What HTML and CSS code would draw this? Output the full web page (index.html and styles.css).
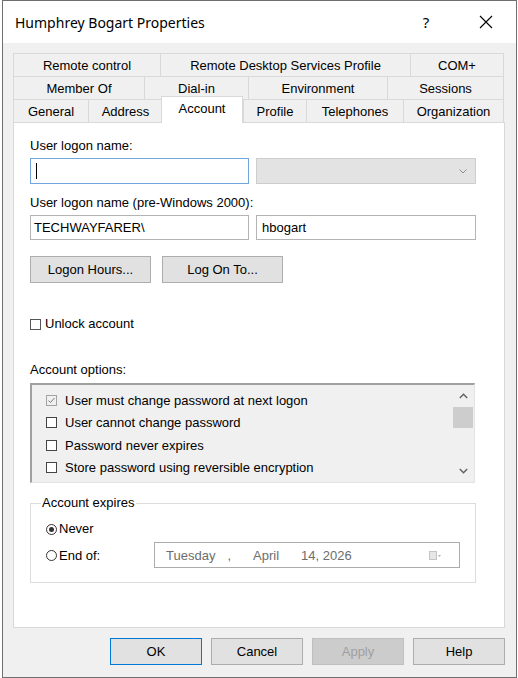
FILE: index.html
```html
<!DOCTYPE html>
<html>
<head>
    <title>Humphrey Bogart Properties</title>
    <link rel="stylesheet" href="styles.css">
</head>
<body>

<div class="window">
    <div class="titlebar">
        <span class="title">Humphrey Bogart Properties</span>
        <span class="help">?</span>
        <span class="close">
            <svg width="14" height="14" viewBox="0 0 14 14"><path d="M1 1L13 13M13 1L1 13" stroke="#000" stroke-width="1.1" fill="none"/></svg>
        </span>
    </div>

    <div class="content">
        <div class="tabs">
            <div class="tab-row row1">
                <div class="tab">Remote control</div>
                <div class="tab">Remote Desktop Services Profile</div>
                <div class="tab">COM+</div>
            </div>
            <div class="tab-row row2">
                <div class="tab">Member Of</div>
                <div class="tab">Dial-in</div>
                <div class="tab">Environment</div>
                <div class="tab">Sessions</div>
            </div>
            <div class="tab-row row3">
                <div class="tab">General</div>
                <div class="tab">Address</div>
                <div class="tab active">Account</div>
                <div class="tab">Profile</div>
                <div class="tab">Telephones</div>
                <div class="tab">Organization</div>
            </div>
        </div>

        <div class="panel">
            <div class="label">User logon name:</div>
            <div class="field-row">
                <div class="input focused"><span class="caret"></span></div>
                <div class="combo">
                    <svg width="8" height="5" viewBox="0 0 8 5"><polyline points="0.5,0.5 4,4 7.5,0.5" fill="none" stroke="#8c8c8c"/></svg>
                </div>
            </div>

            <div class="label second">User logon name (pre-Windows 2000):</div>
            <div class="field-row">
                <div class="input short">TECHWAYFARER\</div>
                <div class="input short wide">hbogart</div>
            </div>

            <div class="button-row">
                <button class="btn">Logon Hours...</button>
                <button class="btn">Log On To...</button>
            </div>

            <div class="check-line unlock">
                <span class="box"></span>
                <span>Unlock account</span>
            </div>

            <div class="label options-label">Account options:</div>
            <div class="listbox">
                <div class="list-items">
                    <div class="list-item">
                        <svg class="tick" width="11" height="11" viewBox="0 0 11 11"><rect x="0.5" y="0.5" width="10" height="10" fill="none" stroke="#a3a3a3"/><polyline points="2.5,5.5 4.5,7.5 8.5,3" fill="none" stroke="#7a7a7a"/></svg>
                        <span>User must change password at next logon</span>
                    </div>
                    <div class="list-item">
                        <span class="box"></span>
                        <span>User cannot change password</span>
                    </div>
                    <div class="list-item">
                        <span class="box"></span>
                        <span>Password never expires</span>
                    </div>
                    <div class="list-item">
                        <span class="box"></span>
                        <span>Store password using reversible encryption</span>
                    </div>
                </div>
                <div class="scrollbar">
                    <div class="arrow">
                        <svg width="9" height="6" viewBox="0 0 9 6"><polyline points="0.8,5 4.5,1.2 8.2,5" fill="none" stroke="#606060" stroke-width="1.4"/></svg>
                    </div>
                    <div class="thumb"></div>
                    <div class="track"></div>
                    <div class="arrow">
                        <svg width="9" height="6" viewBox="0 0 9 6"><polyline points="0.8,1 4.5,4.8 8.2,1" fill="none" stroke="#606060" stroke-width="1.4"/></svg>
                    </div>
                </div>
            </div>

            <fieldset class="expires">
                <legend>Account expires</legend>
                <div class="radio-line never">
                    <span class="radio checked"></span>
                    <span>Never</span>
                </div>
                <div class="radio-line end">
                    <div class="end-label">
                        <span class="radio"></span>
                        <span>End of:</span>
                    </div>
                    <div class="datepicker">
                        <span class="day">Tuesday</span>
                        <span class="comma">,</span>
                        <span class="month">April</span>
                        <span class="date">14, 2026</span>
                        <svg class="cal" width="13" height="9" viewBox="0 0 13 9"><rect x="0.5" y="0.5" width="7" height="8" fill="#e6e6e6" stroke="#c4c4c4"/><polygon points="9,4 12,4 10.5,6" fill="#b0b0b0"/></svg>
                    </div>
                </div>
            </fieldset>
        </div>

        <div class="dialog-buttons">
            <button class="btn dlg default">OK</button>
            <button class="btn dlg">Cancel</button>
            <button class="btn dlg disabled">Apply</button>
            <button class="btn dlg">Help</button>
        </div>
    </div>
</div>

</body>
</html>
```

FILE: styles.css
```css
* {
    box-sizing: border-box;
}
body {
    margin: 0;
    background-color: #fff;
    font-family: "Liberation Sans", Arial, sans-serif;
    font-size: 13px;
    color: #000;
}
.window {
    margin-left: 2px;
    width: 515px;
    height: 678px;
    border: 1px solid #6f6f6f;
    background-color: #f0f0f0;
}
.titlebar {
    height: 42px;
    background-color: #fff;
    display: flex;
    align-items: center;
    padding-left: 12px;
}
.title {
    font-family: "Noto Sans", sans-serif;
    font-size: 14px;
}
.help {
    margin-left: auto;
    width: 46px;
    text-align: center;
    font-family: "Noto Sans", sans-serif;
    font-size: 15px;
}
.close {
    width: 46px;
    margin-left: 14px;
    margin-right: 7px;
    display: flex;
    justify-content: center;
}
.content {
    padding: 10px 10px 0 10px;
}
.tabs {
    width: 491px;
}
.tab-row {
    display: grid;
    height: 23px;
}
.row1 {
    grid-template-columns: 147px 250px 94px;
}
.row2 {
    grid-template-columns: 131px 104px 139px 117px;
}
.row3 {
    grid-template-columns: 75px 74px 81px 63px 97px 101px;
}
.tab {
    display: flex;
    align-items: center;
    justify-content: center;
    white-space: nowrap;
    border-top: 1px solid #d9d9d9;
    border-left: 1px solid #d9d9d9;
    background-color: #f0f0f0;
}
.tab:last-child {
    border-right: 1px solid #d9d9d9;
}
.tab.active {
    position: relative;
    z-index: 1;
    background-color: #fff;
    margin-top: -3px;
    margin-bottom: -1px;
    margin-left: -1px;
    border-right: 1px solid #d9d9d9;
    padding-bottom: 4px;
}
.panel {
    width: 492px;
    height: 506px;
    background-color: #fff;
    border: 1px solid #d9d9d9;
    padding: 15px 16px 0 16px;
}
.label {
    line-height: 16px;
}
.label.second {
    margin-top: 11px;
}
.field-row {
    display: flex;
    gap: 7px;
    margin-top: 4px;
}
.input {
    width: 219px;
    height: 26px;
    border: 1px solid #b4b4b4;
    padding-left: 3px;
    display: flex;
    align-items: center;
    background-color: #fff;
}
.input.focused {
    border-color: #6fa6de;
}
.input.short {
    height: 25px;
}
.input.wide {
    width: 220px;
    padding-left: 5px;
}
.caret {
    width: 1px;
    height: 16px;
    margin-left: 2px;
    background-color: #000;
}
.combo {
    width: 220px;
    height: 26px;
    background-color: #e3e3e3;
    border: 1px solid #cdcdcd;
    display: flex;
    align-items: center;
    justify-content: flex-end;
    padding-right: 8px;
}
.button-row {
    display: flex;
    gap: 11px;
    margin-top: 16px;
}
.btn {
    height: 27px;
    width: 121px;
    background-color: #e1e1e1;
    border: 1px solid #adadad;
    font-family: "Liberation Sans", Arial, sans-serif;
    font-size: 13px;
    color: #000;
    padding: 0;
}
.check-line {
    display: flex;
    align-items: center;
    gap: 4px;
    line-height: 16px;
}
.unlock {
    margin-top: 33px;
}
.box {
    width: 11px;
    height: 11px;
    border: 1px solid #333;
    background-color: #fff;
}
.unlock .box {
    border-color: #555;
}
.options-label {
    margin-top: 30px;
}
.listbox {
    margin-top: 5px;
    width: 445px;
    height: 100px;
    display: flex;
    background-color: #f0f0f0;
    border-top: 2px solid #a0a0a0;
    border-left: 2px solid #a0a0a0;
    border-right: 1px solid #e3e3e3;
    border-bottom: 1px solid #e3e3e3;
}
.list-items {
    flex: 1;
    padding: 4px 0 0 14px;
}
.list-item {
    height: 22.5px;
    display: flex;
    align-items: center;
    gap: 8px;
}
.list-item .box {
    border-color: #444;
}
.scrollbar {
    width: 20px;
    margin-right: 1px;
    display: flex;
    flex-direction: column;
}
.arrow {
    height: 22px;
    display: flex;
    align-items: center;
    justify-content: center;
}
.thumb {
    height: 21px;
    background-color: #cdcdcd;
}
.track {
    flex: 1;
}
.expires {
    margin: 12px 0 0 0;
    width: 446px;
    border: 1px solid #dcdcdc;
    padding: 0 10px 14px 10px;
}
.expires legend {
    padding: 0 1px;
    line-height: 16px;
}
.radio-line {
    display: flex;
    align-items: center;
    gap: 2px;
    margin-left: 5px;
}
.never {
    margin-top: 10px;
    line-height: 16px;
}
.end {
    margin-top: 5px;
    gap: 0;
}
.end-label {
    width: 108px;
    display: flex;
    align-items: center;
    gap: 2px;
}
.radio {
    width: 11px;
    height: 11px;
    border: 1px solid #333;
    border-radius: 50%;
    display: flex;
    align-items: center;
    justify-content: center;
    background-color: #fff;
}
.radio.checked::after {
    content: "";
    width: 5px;
    height: 5px;
    border-radius: 50%;
    background-color: #333;
}
.datepicker {
    width: 306px;
    height: 26px;
    border: 1px solid #acacac;
    background-color: #fff;
    display: flex;
    align-items: center;
    padding-left: 11px;
    color: #6d6d6d;
}
.comma {
    margin-left: 12px;
}
.month {
    margin-left: 22px;
}
.date {
    margin-left: 22px;
}
.cal {
    margin-left: auto;
    margin-right: 17px;
}
.dialog-buttons {
    display: flex;
    justify-content: flex-end;
    gap: 9px;
    margin-top: 10px;
    width: 492px;
}
.btn.dlg {
    width: 92px;
}
.btn.default {
    border-color: #0078d7;
}
.btn.disabled {
    background-color: #cccccc;
    border-color: #bfbfbf;
    color: #a0a0a0;
}
```
